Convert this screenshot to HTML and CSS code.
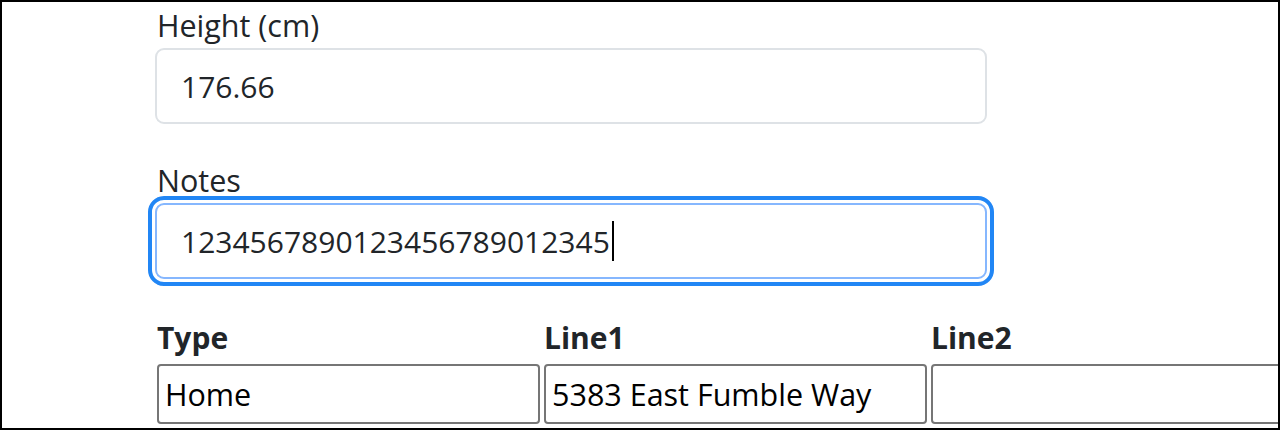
FILE: index.html
```html
<!DOCTYPE html>
<html lang="en">
  <head>
    <meta charset="UTF-8" />
    <meta name="viewport" content="width=device-width, initial-scale=1.0" />
    <title>Person Editor</title>
    <link rel="stylesheet" href="styles.css">
  </head>
  <body>
    <div class="frame">
      <div class="form">
        <div class="form-group">
          <label for="height">Height (cm)</label>
          <input id="height" class="form-control" type="text" value="176.66">
        </div>

        <div class="form-group">
          <label>Notes</label>
          <div class="form-control focused">1234567890123456789012345<span class="caret"></span></div>
        </div>

        <table class="addresses">
          <thead>
            <tr>
              <th>Type</th>
              <th>Line1</th>
              <th>Line2</th>
            </tr>
          </thead>
          <tbody>
            <tr>
              <td><input class="cell-input" type="text" value="Home"></td>
              <td><input class="cell-input" type="text" value="5383 East Fumble Way"></td>
              <td><input class="cell-input" type="text" value=""></td>
            </tr>
          </tbody>
        </table>
      </div>
    </div>
  </body>
</html>
```

FILE: styles.css
```css
* {
  box-sizing: border-box;
}

body {
  margin: 0;
  font-family: 'Open Sans', 'Noto Sans', sans-serif;
  color: #212529;
  background: #ffffff;
}

.frame {
  height: 430px;
  border: 2px solid #000000;
  overflow: hidden;
  padding: 5px 0 0 153px;
}

.form {
  width: 832px;
}

.form-group {
  margin-bottom: 38px;
}

.form-group label {
  display: block;
  font-size: 30.5px;
  line-height: 36px;
  margin: 0 0 5px 2px;
}

.form-control {
  display: block;
  width: 100%;
  height: 76px;
  padding: 0 24px;
  font-family: inherit;
  font-size: 30px;
  color: #212529;
  background: #ffffff;
  border: 2px solid #dee2e6;
  border-radius: 9px;
  outline: none;
}

.form-control.focused {
  display: flex;
  align-items: center;
  border-color: #86b7fe;
  outline: 4px solid #2186f5;
  outline-offset: 3px;
}

.caret {
  display: inline-block;
  width: 2px;
  height: 40px;
  margin-left: 2px;
  background: #000000;
}

.addresses {
  border-spacing: 2px;
  margin: 0 0 0 -1px;
  width: 1163px;
  table-layout: fixed;
}

.addresses th {
  text-align: left;
  font-size: 30px;
  font-weight: 700;
  line-height: 36px;
  padding: 1px 1px 5px;
}

.addresses td {
  padding: 1px;
}

.cell-input {
  display: block;
  width: 100%;
  height: 60px;
  padding: 0 6px;
  font-family: inherit;
  font-size: 30.5px;
  color: #000000;
  border: 2px solid #767676;
  border-radius: 4px;
  background: #ffffff;
}
```
